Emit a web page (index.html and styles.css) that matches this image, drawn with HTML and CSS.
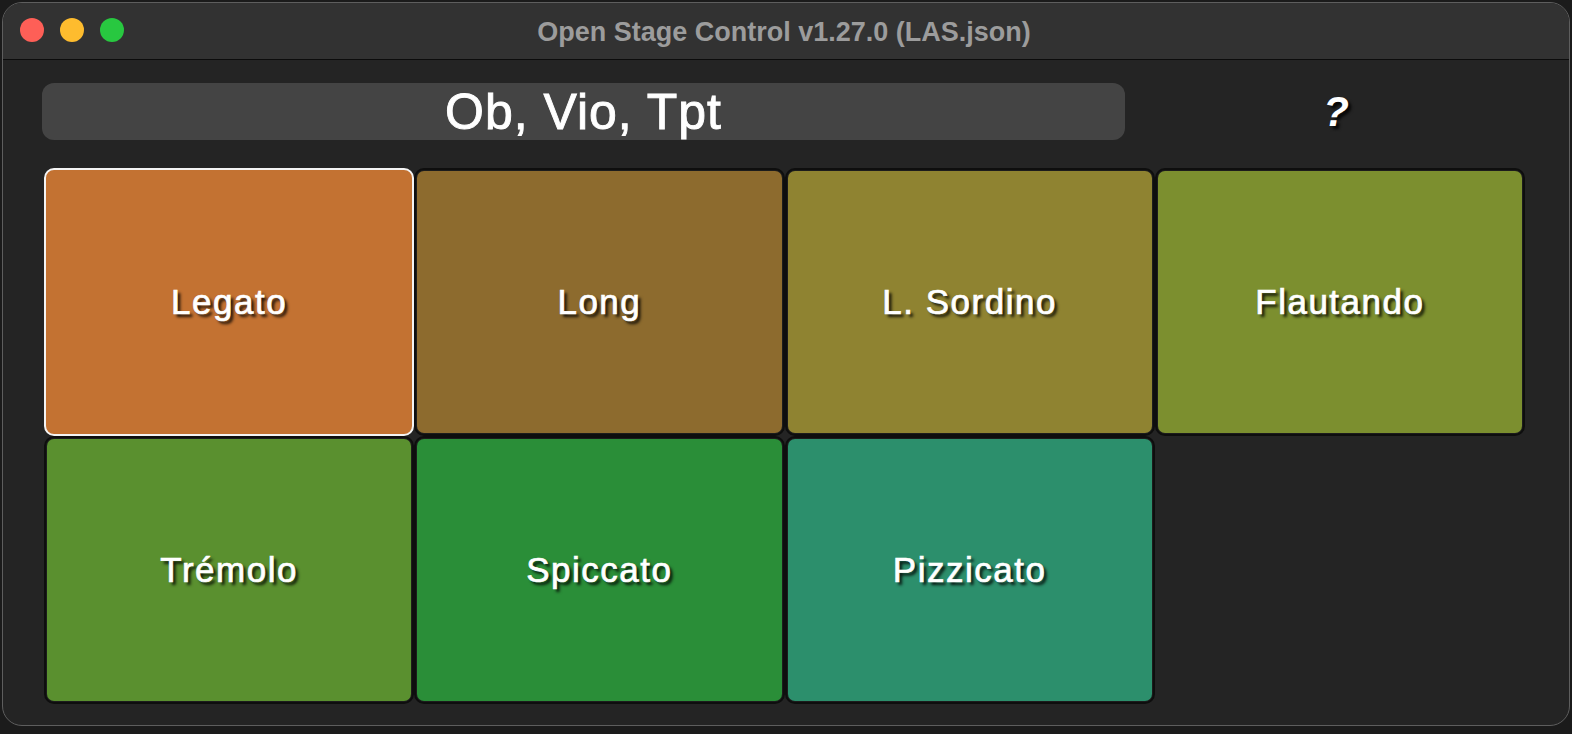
FILE: index.html
```html
<!DOCTYPE html>
<html>
<head>
<meta charset="utf-8">
<link rel="stylesheet" href="styles.css">
</head>
<body>
<div class="window">
  <div class="titlebar">
    <div class="lights">
      <span class="light red"></span>
      <span class="light yellow"></span>
      <span class="light green"></span>
    </div>
    <div class="title">Open Stage Control v1.27.0 (LAS.json)</div>
  </div>
  <div class="content">
    <div class="header">
      <div class="field">Ob, Vio, Tpt</div>
      <div class="help">?</div>
    </div>
    <div class="grid">
      <div class="cell active c-legato"><span>Legato</span></div>
      <div class="cell"><div class="inner c-long"><span>Long</span></div></div>
      <div class="cell"><div class="inner c-sord"><span>L. Sordino</span></div></div>
      <div class="cell"><div class="inner c-flaut"><span>Flautando</span></div></div>
      <div class="cell"><div class="inner c-trem"><span>Trémolo</span></div></div>
      <div class="cell"><div class="inner c-spic"><span>Spiccato</span></div></div>
      <div class="cell"><div class="inner c-pizz"><span>Pizzicato</span></div></div>
    </div>
  </div>
</div>
</body>
</html>
```
FILE: styles.css
```css
html, body {
  margin: 0;
  padding: 0;
}
body {
  width: 1572px;
  height: 734px;
  background: #1b1b1b;
  font-family: "Liberation Sans", Arial, sans-serif;
  overflow: hidden;
  padding: 2px 0 0 2px;
  box-sizing: border-box;
}
.window {
  width: 1568px;
  height: 724px;
  box-sizing: border-box;
  border: 1px solid #5e5e5e;
  border-radius: 20px;
  overflow: hidden;
  background: #242424;
  display: flex;
  flex-direction: column;
}
.titlebar {
  height: 56px;
  flex: none;
  background: #323232;
  border-bottom: 1px solid #0c0c0c;
  position: relative;
  display: flex;
  align-items: center;
  justify-content: center;
}
.lights {
  position: absolute;
  left: 17px;
  top: 15px;
  display: flex;
  gap: 16px;
}
.light {
  width: 24px;
  height: 24px;
  border-radius: 50%;
  display: block;
}
.red { background: #fe5f57; }
.yellow { background: #febc2e; }
.green { background: #28c840; }
.title {
  color: #9c9c9c;
  font-weight: bold;
  font-size: 27px;
  margin-left: -4px;
  margin-top: 2px;
}
.content {
  padding: 23px 0 0 39px;
  display: flex;
  flex-direction: column;
}
.header {
  display: flex;
  align-items: center;
  height: 57px;
}
.field {
  width: 1083px;
  height: 57px;
  background: #444444;
  border-radius: 12px;
  color: #ffffff;
  font-size: 50px;
  letter-spacing: 1px;
  -webkit-text-stroke: 0.9px #ffffff;
  display: flex;
  align-items: center;
  justify-content: center;
  box-sizing: border-box;
}
.help {
  width: 422px;
  text-align: center;
  color: #ffffff;
  font-size: 42px;
  font-weight: bold;
  font-style: italic;
  text-shadow: 3px 3px 3px rgba(0, 0, 0, 0.85);
}
.grid {
  margin: 28px 0 0 2px;
  display: grid;
  grid-template-columns: repeat(4, 370.25px);
  grid-template-rows: 268px 268px;
}
.cell {
  box-sizing: border-box;
  border: 2px solid #0e0e0e;
  border-radius: 10px;
  padding: 1px;
  background: #1c1c1c;
  display: flex;
}
.inner {
  flex: 1;
  border-radius: 7px;
  display: flex;
  align-items: center;
  justify-content: center;
}
.cell.active {
  border: 2px solid #f4f4f4;
  padding: 0;
  align-items: center;
  justify-content: center;
}
.cell span {
  color: #ffffff;
  font-size: 35px;
  letter-spacing: 1.5px;
  -webkit-text-stroke: 0.7px #ffffff;
  text-shadow: 3px 3px 3px rgba(0, 0, 0, 0.85);
}
.c-legato { background: #c37232; }
.c-long { background: #8d6b2e; }
.c-sord { background: #8f8331; }
.c-flaut { background: #7c8f2f; }
.c-trem { background: #5a902f; }
.c-spic { background: #2a8e38; }
.c-pizz { background: #2c8f6c; }
```
